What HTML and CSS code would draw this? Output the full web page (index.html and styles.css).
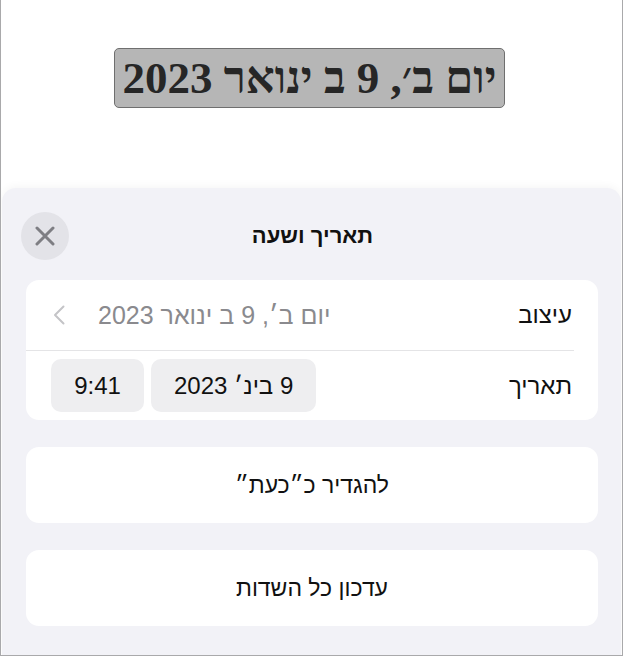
FILE: index.html
```html
<!DOCTYPE html>
<html lang="he">
<head>
    <meta charset="UTF-8">
    <title>תאריך ושעה</title>
    <link rel="stylesheet" href="styles.css">
</head>
<body>
    <div class="screen" dir="rtl">
        <div class="canvas">
            <div class="date-field">יום ב׳, 9 ב ינואר 2023</div>
        </div>

        <div class="sheet">
            <div class="sheet-header">
                <div></div>
                <div class="sheet-title">תאריך ושעה</div>
                <button class="close-btn" aria-label="סגור">
                    <svg width="20" height="20" viewBox="0 0 20 20">
                        <path d="M2 2 L18 18 M18 2 L2 18" stroke="#7e7e83" stroke-width="3" stroke-linecap="round"/>
                    </svg>
                </button>
            </div>

            <div class="group">
                <div class="row">
                    <div class="row-label">עיצוב</div>
                    <div class="row-value">
                        <span class="format-text">יום ב׳, 9 ב ינואר 2023</span>
                        <svg class="chevron" width="12" height="20" viewBox="0 0 12 20">
                            <path d="M10.5 1.5 L2 10 L10.5 18.5" fill="none" stroke="#c4c4c7" stroke-width="2" stroke-linecap="round" stroke-linejoin="round"/>
                        </svg>
                    </div>
                </div>
                <div class="row">
                    <div class="row-label">תאריך</div>
                    <div class="pills">
                        <span class="pill">9 בינ׳ 2023</span>
                        <span class="pill">9:41</span>
                    </div>
                </div>
            </div>

            <button class="action">להגדיר כ״כעת״</button>
            <button class="action">עדכון כל השדות</button>
        </div>
    </div>
</body>
</html>
```

FILE: styles.css
```css
:root {
    --sheet: #f2f2f7;
    --card: #ffffff;
    --text: #111111;
    --muted: #8a8a8e;
    --fill: #eeeef0;
}

* {
    margin: 0;
    padding: 0;
    box-sizing: border-box;
}

body {
    background: #ffffff;
    font-family: "Liberation Sans", "DejaVu Sans", sans-serif;
    color: var(--text);
}

.screen {
    width: 623px;
    height: 656px;
    border: 1px solid #a9a9ab;
    border-top: none;
    display: flex;
    flex-direction: column;
    overflow: hidden;
}

.canvas {
    height: 188px;
    flex-shrink: 0;
    display: flex;
    justify-content: center;
    padding: 48px 4px 0 0;
}

.date-field {
    height: 60px;
    padding: 0 7px;
    background: #b6b6b6;
    border: 1.5px solid #6f6f6f;
    border-radius: 5px;
    font-family: "Liberation Serif", "DejaVu Serif", serif;
    font-weight: bold;
    font-size: 45px;
    line-height: 58px;
    color: #262626;
    white-space: nowrap;
}

.sheet {
    flex: 1;
    margin: 0 1px;
    background: var(--sheet);
    border-radius: 14px 14px 0 0;
    box-shadow: 0 -2px 8px rgba(0, 0, 0, 0.04);
    padding: 24px 23px 0 24px;
    display: flex;
    flex-direction: column;
}

.sheet-header {
    display: grid;
    grid-template-columns: 48px 1fr 48px;
    align-items: center;
    height: 48px;
    margin-left: -5px;
}

.sheet-title {
    text-align: center;
    font-weight: bold;
    font-size: 22px;
    padding-left: 6px;
}

.close-btn {
    width: 48px;
    height: 48px;
    border-radius: 50%;
    border: none;
    background: #e3e3e8;
    display: flex;
    align-items: center;
    justify-content: center;
}

.group {
    margin-top: 20px;
    background: var(--card);
    border-radius: 13px;
}

.row {
    height: 70px;
    display: flex;
    align-items: center;
    justify-content: space-between;
    padding: 0 26px 0 25px;
    font-size: 24px;
}

.row + .row {
    border-top: 1.5px solid #e4e4e6;
    margin-right: 24px;
    padding-right: 2px;
}

.row-value {
    display: flex;
    align-items: center;
    gap: 33px;
    color: var(--muted);
    font-size: 25px;
}

.chevron {
    display: block;
    margin-left: 2px;
}

.pills {
    display: flex;
    gap: 7px;
}

.pill {
    min-width: 93px;
    height: 53px;
    line-height: 53px;
    padding: 0 23px;
    text-align: center;
    background: var(--fill);
    border-radius: 10px;
}

.action {
    margin-top: 27px;
    height: 76px;
    border: none;
    border-radius: 13px;
    background: var(--card);
    font-family: inherit;
    font-size: 23px;
    color: var(--text);
}
```
